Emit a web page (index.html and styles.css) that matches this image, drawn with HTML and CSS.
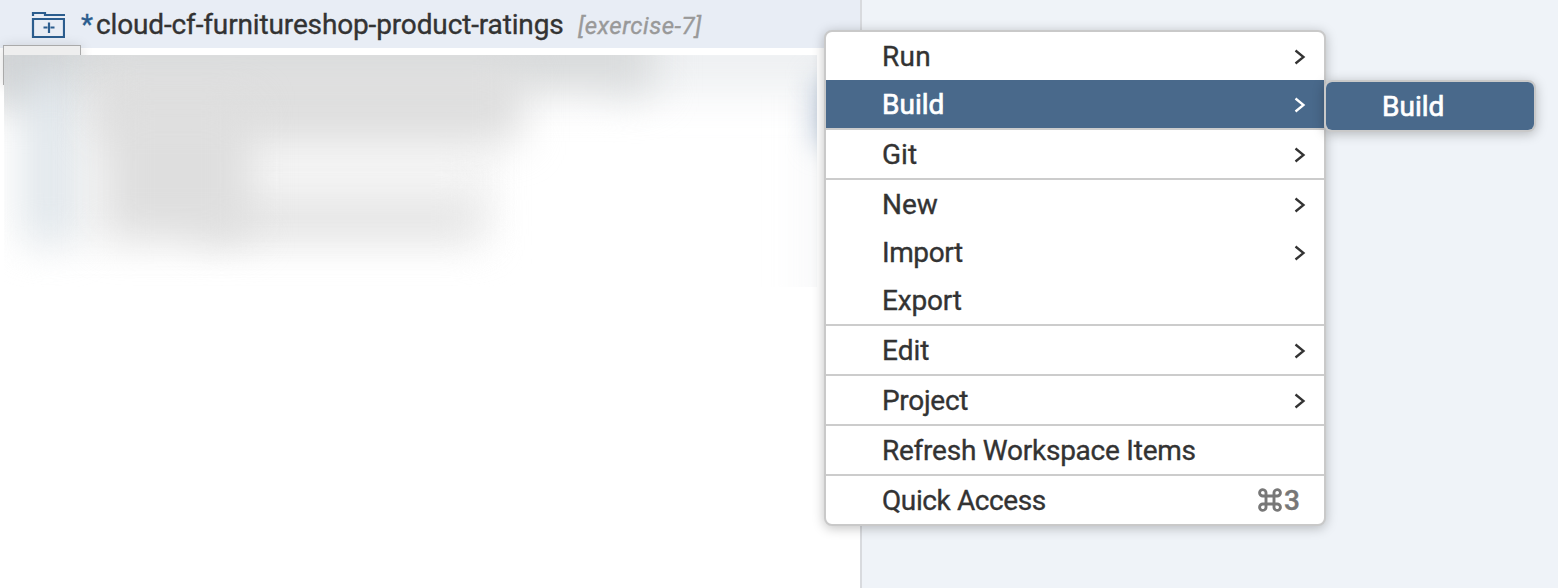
FILE: index.html
```
<!DOCTYPE html>
<html lang="en">
<head>
<meta charset="utf-8">
<title>Workspace</title>
<link rel="stylesheet" href="styles.css">
</head>
<body>
<div class="workspace">
  <main class="files">
    <header class="project-row">
      <svg class="folder" width="34" height="28" viewBox="0 0 34 28" fill="none" stroke="#2b5d8e" stroke-width="2.2">
        <path d="M2 5V2H14V4H34" />
        <path d="M2 8H33V26H2Z" />
        <path d="M18 11.500V22M12.500 16.500H16.500M19.500 16.500H23.500" />
      </svg>
      <span class="modified">*</span>
      <span class="project-name">cloud-cf-furnitureshop-product-ratings</span>
      <span class="branch">[exercise-7]</span>
    </header>
    <div class="tooltip"></div>
    <div class="obscured">
      <i class="smudge haze"></i>
      <i class="smudge middle"></i>
      <i class="smudge edge-low"></i>
      <i class="smudge top-end"></i>
      <i class="smudge top-line"></i>
      <i class="smudge corner"></i>
      <i class="smudge icons"></i>
      <i class="smudge names"></i>
      <i class="smudge names-last"></i>
      <i class="smudge names-low"></i>
      <i class="smudge edge"></i>
    </div>
  </main>
  <aside class="editor"></aside>
</div>

<nav class="menu main-menu">
  <div class="item"><span class="label t-run">Run</span><svg class="arrow" viewBox="0 0 12 16"><path d="M1.500 1.500L9.500 8L1.500 14.500"/></svg></div>
  <div class="item selected"><span class="label">Build</span><svg class="arrow" viewBox="0 0 12 16"><path d="M1.500 1.500L9.500 8L1.500 14.500"/></svg></div>
  <div class="item divided"><span class="label">Git</span><svg class="arrow" viewBox="0 0 12 16"><path d="M1.500 1.500L9.500 8L1.500 14.500"/></svg></div>
  <div class="item divided"><span class="label">New</span><svg class="arrow" viewBox="0 0 12 16"><path d="M1.500 1.500L9.500 8L1.500 14.500"/></svg></div>
  <div class="item"><span class="label t-import">Import</span><svg class="arrow" viewBox="0 0 12 16"><path d="M1.500 1.500L9.500 8L1.500 14.500"/></svg></div>
  <div class="item"><span class="label t-export">Export</span></div>
  <div class="item divided"><span class="label">Edit</span><svg class="arrow" viewBox="0 0 12 16"><path d="M1.500 1.500L9.500 8L1.500 14.500"/></svg></div>
  <div class="item divided"><span class="label t-project">Project</span><svg class="arrow" viewBox="0 0 12 16"><path d="M1.500 1.500L9.500 8L1.500 14.500"/></svg></div>
  <div class="item divided"><span class="label t-refresh">Refresh Workspace Items</span></div>
  <div class="item divided"><span class="label t-quick">Quick Access</span><span class="shortcut"><svg class="command" viewBox="0 0 24 24"><path d="M8 8H16V16H8ZM8 8H5A3.200 3.200 0 1 1 8 5ZM16 8V5A3.200 3.200 0 1 1 19 8ZM16 16H19A3.200 3.200 0 1 1 16 19ZM8 16V19A3.200 3.200 0 1 1 5 16Z"/></svg><span class="label">3</span></span></div>
</nav>
<nav class="menu sub-menu">
  <div class="item selected"><span class="label">Build</span></div>
</nav>
</body>
</html>
```
FILE: styles.css
```
* { box-sizing: border-box; }
body {
  margin: 0;
  width: 1558px;
  height: 588px;
  overflow: hidden;
  position: relative;
  font-family: Roboto, "Liberation Sans", sans-serif;
  font-size: 28px;
  line-height: 32px;
  color: #333;
  -webkit-text-stroke: .35px currentColor;
}
.workspace { display: flex; height: 588px; }
.files {
  position: relative;
  width: 862px;
  border-right: 2px solid #d8dade;
  background: #fff;
}
.editor { flex: 1; background: #eff3f8; }
.project-row {
  display: flex;
  align-items: center;
  height: 48px;
  padding-left: 31px;
  background: #e8edf5;
  white-space: nowrap;
}
.folder { flex: none; margin-top: 1px; }
.modified { width: 15px; margin-left: 16px; padding-top: 2px; color: #2b5d8e; }
.project-name { width: 482px; padding-top: 2px; letter-spacing: -.140px; }
.branch { font-size: 24px; font-style: italic; color: #999; letter-spacing: .5px; padding-top: 3px; }

.tooltip {
  position: absolute;
  left: 3px;
  top: 45px;
  width: 78px;
  height: 40px;
  border: 1px solid #aaa;
  background: #eee;
  box-shadow: 0 1px 12px rgba(0, 0, 0, .14);
}
.obscured {
  position: absolute;
  left: 4px;
  top: 55px;
  width: 813px;
  height: 232px;
  overflow: hidden;
  background: #fff;
}
.smudge { position: absolute; filter: blur(20px); }
.haze { left: 20px; top: 0; width: 465px; height: 190px; background: #f7f7f7; }
.top-line { left: -40px; top: -60px; width: 690px; height: 98px; background: #d9dbdc; }
.top-end { left: 600px; top: -50px; width: 270px; height: 90px; background: #eff1f3; }
.corner { left: -10px; top: -40px; width: 72px; height: 90px; background: #cfd2d4; }
.icons { left: 22px; top: 20px; width: 48px; height: 166px; background: #dfe6eb; }
.names { left: 92px; top: 10px; width: 425px; height: 76px; background: #dedede; }
.names-low { left: 102px; top: 50px; width: 144px; height: 132px; background: #dedede; }
.names-last { left: 190px; top: 144px; width: 286px; height: 38px; background: #e3e3e3; }
.middle { left: 230px; top: 90px; width: 250px; height: 70px; background: #f6f6f6; }
.edge { left: 812px; top: 24px; width: 40px; height: 66px; background: #b3c2d5; filter: blur(14px); }
.edge-low { left: 800px; top: 0; width: 40px; height: 270px; background: #f7f8f9; }

.menu {
  position: absolute;
  border: 2px solid #c9c9c9;
  border-radius: 8px;
  background: #fff;
  overflow: hidden;
  box-shadow: 0 2px 12px rgba(0, 0, 0, .25);
}
.main-menu { left: 824px; top: 30px; width: 502px; }
.sub-menu { left: 1324px; top: 80px; width: 212px; }
.item {
  display: flex;
  align-items: center;
  justify-content: space-between;
  height: 48px;
  padding: 0 18px 0 56px;
  white-space: nowrap;
}
.label { padding-top: 2px; }
.divided { height: 50px; border-top: 2px solid #ccc; }
.selected { background: #49698b; color: #fff; -webkit-text-stroke: .7px #fff; }
.t-run { letter-spacing: .3px; }
.t-import { letter-spacing: -.4px; }
.t-export { letter-spacing: -.2px; }
.t-project { letter-spacing: -.3px; }
.t-refresh { letter-spacing: -.24px; }
.t-quick { letter-spacing: -.4px; }
.arrow {
  width: 12px;
  height: 16px;
  margin-top: 2px;
  fill: none;
  stroke: currentColor;
  stroke-width: 2.300;
}
.shortcut { display: flex; align-items: center; gap: 2px; margin-right: 6px; color: #777; font-weight: 500; }
.command { width: 24px; height: 24px; fill: none; stroke: #777; stroke-width: 2.900; }
```
